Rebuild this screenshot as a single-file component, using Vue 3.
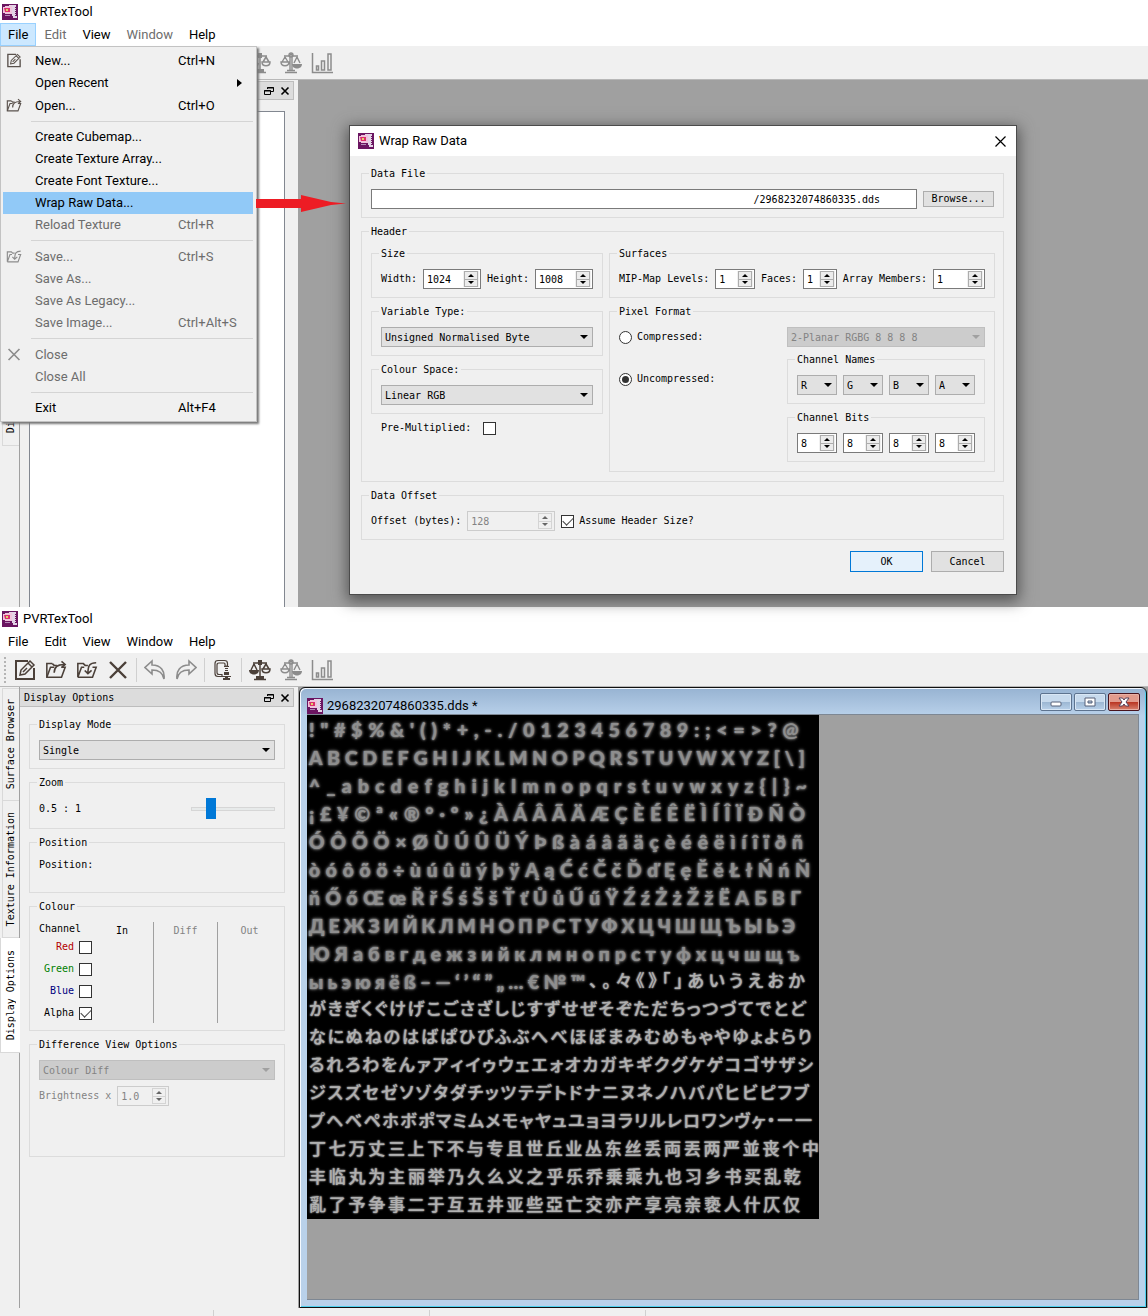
<script setup>
import { ref } from 'vue'

const menus = ['File', 'Edit', 'View', 'Window', 'Help']
const dimmed = ['Edit', 'Window']

const fileMenu = [
  { label: 'New...', key: 'Ctrl+N', icon: 'new' },
  { label: 'Open Recent', sub: true },
  { label: 'Open...', key: 'Ctrl+O', icon: 'open' },
  { sep: true },
  { label: 'Create Cubemap...' },
  { label: 'Create Texture Array...' },
  { label: 'Create Font Texture...' },
  { label: 'Wrap Raw Data...', active: true },
  { label: 'Reload Texture', key: 'Ctrl+R', off: true },
  { sep: true },
  { label: 'Save...', key: 'Ctrl+S', icon: 'save', off: true },
  { label: 'Save As...', off: true },
  { label: 'Save As Legacy...', off: true },
  { label: 'Save Image...', key: 'Ctrl+Alt+S', off: true },
  { sep: true },
  { label: 'Close', icon: 'close', off: true },
  { label: 'Close All', off: true },
  { sep: true },
  { label: 'Exit', key: 'Alt+F4' },
]

const tools = [
  [
    { icon: 'new', name: 'New' },
    { icon: 'open', name: 'Open' },
    { icon: 'save', name: 'Save' },
    { icon: 'close', name: 'Close' },
  ],
  [
    { icon: 'undo', name: 'Undo', off: true },
    { icon: 'redo', name: 'Redo', off: true },
  ],
  [{ icon: 'compress', name: 'Compress' }],
  [
    { icon: 'scale-left', name: 'Compare left' },
    { icon: 'scale-right', name: 'Compare right', off: true },
    { icon: 'chart', name: 'Statistics', off: true },
  ],
]

const size = ref([
  { label: 'Width:', value: 1024, cls: 'w58' },
  { label: 'Height:', value: 1008, cls: 'w58' },
])
const surfaces = ref([
  { label: 'MIP-Map Levels:', value: 1, cls: 'w40' },
  { label: 'Faces:', value: 1, cls: 'w34' },
  { label: 'Array Members:', value: 1, cls: 'w52' },
])
const names = ['R', 'G', 'B', 'A']
const bits = ref([8, 8, 8, 8])
const channels = ref([
  { name: 'Red', on: false },
  { name: 'Green', on: false },
  { name: 'Blue', on: false },
  { name: 'Alpha', on: true },
])
const format = ref('uncompressed')
const zoom = ref(20)

// Glyph rows of the font texture; width is the packed extent of the row.
const glyphRows = [
  { text: '!"#$%&\'()*+,-./0123456789:;<=>?@', width: 490 },
  { text: 'ABCDEFGHIJKLMNOPQRSTUVWXYZ[\\]', width: 496 },
  { text: '^_abcdefghijklmnopqrstuvwxyz{|}~', width: 498 },
  { text: '¡£¥©ª«®°·º»¿ÀÁÂÃÄÆÇÈÉÊËÌÍÎÏÐÑÒ', width: 496 },
  { text: 'ÓÔÕÖ×ØÙÚÛÜÝÞßàáâãäçèéêëìíîïðñ', width: 494 },
  { text: 'òóôõö÷ùúûüýþÿĄąĆćČčĎďĘęĚěŁłŃńŇ', width: 501 },
  { text: 'ňŐőŒœŘřŚśŠšŤťŮůŰűŸŹźŻżŽžЁАБВГ', width: 492 },
  { text: 'ДЕЖЗИЙКЛМНОПРСТУФХЦЧШЩЪЫЬЭ', width: 486 },
  { text: 'ЮЯабвгдежзийклмнопрстуфхцчшщъ', width: 490 },
  { text: 'ыьэюяёß–—‘’“”„…€№™、。々《》「」あいうえおか', width: 496 },
  { text: 'がきぎくぐけげこごさざしじすずせぜそぞただちっつづてでとど', width: 497 },
  { text: 'なにぬねのはばぱひびふぶへべほぼまみむめもゃやゆょよらり', width: 503 },
  { text: 'るれろわをんァアィイゥウェエォオカガキギクグケゲコゴサザシ', width: 504 },
  { text: 'ジスズセゼソゾタダチッツテデトドナニヌネノハバパヒビピフブ', width: 500 },
  { text: 'プヘベペホボポマミムメモャヤュユョヨラリルレロワンヴヶ・ー一', width: 503 },
  { text: '丁七万丈三上下不与专且世丘业丛东丝丢両丟两严並丧个中', width: 510 },
  { text: '丰临丸为主丽举乃久么义之乎乐乔乗乘九也习乡书买乱乾', width: 492 },
  { text: '亂了予争事二于互五井亚些亞亡交亦产享亮亲亵人什仄仅', width: 491 },
]
const isCjk = (c) => c >= '\u3000'
</script>

<template>
  <main class="page">
    <svg class="defs" aria-hidden="true">
      <symbol id="icon-app" viewBox="0 0 16 16">
        <rect width="16" height="16" fill="#6b1561" />
        <path d="M7 1h7v2h-1v1h1v1h-1v1h1v1h-1v1h1v1h-1v1h1v1h-1v1h2v2h-4v-2h-1V3H7z" fill="#e3d3e6" />
        <path d="M1 3h2V2h7v8H3v-1H1z" fill="#f0c3dc" />
        <path d="M2 4h6v4H3z" fill="#dc2f6c" />
        <path d="M4 5h2v2H4z" fill="#d9d86a" />
        <path d="M3 11h5v1H3z" fill="#b58bb8" />
      </symbol>
      <symbol id="icon-new" viewBox="0 0 22 22">
        <g fill="none" stroke="currentColor">
          <path d="M14 2H2v18h18V9" stroke-width="2" />
          <path d="M6 16l1-5 9-9 4 4-9 9zM14 4l4 4M9 13l4-4" stroke-width="1.500" />
        </g>
      </symbol>
      <symbol id="icon-open" viewBox="0 0 24 22">
        <g fill="none" stroke="currentColor" stroke-width="1.700">
          <path d="M8 4H2v15h16l4-11h-4" />
          <path d="M2 19l4-11h4M10 14c0-6 3-9 11-9M18 1.500l4 3.500-4 3.500" />
          <path d="M8 4l2 2h3" />
        </g>
      </symbol>
      <symbol id="icon-save" viewBox="0 0 24 22">
        <g fill="none" stroke="currentColor" stroke-width="1.700">
          <path d="M9 8H6L2 19V4h6l2 2h3M2 19h16l4-11h-4" />
          <path d="M22 3c-7 0-9 3-9 12M9.500 11.500L13 15l4-3.500" />
        </g>
      </symbol>
      <symbol id="icon-close" viewBox="0 0 22 22">
        <path d="M3 3l16 16M19 3L3 19" fill="none" stroke="currentColor" stroke-width="2.400" />
      </symbol>
      <symbol id="icon-undo" viewBox="0 0 22 22">
        <path d="M8 2L1 8.500 8 15v-4c7 0 11 3 12 9 1-8-3-14-12-14z" fill="none" stroke="currentColor" stroke-width="1.600" />
      </symbol>
      <symbol id="icon-redo" viewBox="0 0 22 22">
        <path d="M14 2l7 6.500L14 15v-4c-7 0-11 3-12 9C1 12 5 6 14 6z" fill="none" stroke="currentColor" stroke-width="1.600" />
      </symbol>
      <symbol id="icon-compress" viewBox="0 0 22 22">
        <path d="M15.500 7V4.500q0-3-3-3H6q-3 0-3 3v10q0 3 3 3h4v-2H7q-2 0-2-2V6q0-2 2-2h5q1 0 1 1v2z" fill="#f0f0f0" stroke="currentColor" stroke-width="1.200" />
        <path d="M12 7h5v1h-5zM13 9h3v1h-3zM13 11h3v1h-3zM12 13h5v3h-5zM10 17h9v1h-9zM13 18h3v1h2v2h-7v-2h2z" fill="currentColor" />
      </symbol>
      <symbol id="icon-scale-left" viewBox="0 0 22 22">
        <g fill="none" stroke="currentColor" stroke-width="1.500">
          <path d="M4 4h5l2-2 2 2h5M11 2v16M5 20.500h12M7 18.500h8M5 5l-3 6M5 5l3 6M17 5l-3 5M17 5l3 5M13 10h8c0 5-8 5-8 0z" />
        </g>
        <path d="M0 11h10c0 6-10 6-10 0zM9 1h4v5H9zM7 17h8v4H7z" fill="currentColor" />
      </symbol>
      <symbol id="icon-scale-right" viewBox="0 0 22 22">
        <g fill="none" stroke="currentColor" stroke-width="1.400">
          <path d="M4 4h5l2-2 2 2h5M10 3v15M12 3v15M5 20.500h12M7 18.500h8M5 5l-3 5M5 5l3 5M17 5l-3 6M17 5l3 6M1 10h8c0 5-8 5-8 0z" />
          <circle cx="11" cy="3" r="2" />
        </g>
        <path d="M12 12h10c0 6-10 6-10 0z" fill="currentColor" />
      </symbol>
      <symbol id="icon-chart" viewBox="0 0 22 22">
        <path d="M1.500 1v19.500H22M5.500 18v-4h2v4zM10.500 18V9h3v9zM17 18V2h3v16z" fill="none" stroke="currentColor" stroke-width="1.500" />
      </symbol>
    </svg>

    <section v-for="win in [1, 2]" :key="win" class="window">
      <header class="caption ui"><svg class="i16"><use href="#icon-app" /></svg>PVRTexTool</header>
      <nav class="menubar">
        <button
          v-for="m in menus"
          :key="m"
          class="menu ui"
          :class="{ open: win === 1 && m === 'File', dim: win === 1 && dimmed.includes(m) }"
        >{{ m }}</button>
      </nav>
      <div class="toolbar">
        <span class="grip"></span>
        <div v-for="(group, g) in tools" :key="g" class="toolgroup">
          <button
            v-for="t in group"
            :key="t.icon"
            class="tool"
            :class="{ off: t.off || win === 1 }"
            :aria-label="t.name"
          ><svg><use :href="'#icon-' + t.icon" /></svg></button>
        </div>
      </div>

      <div class="work" :class="{ first: win === 1 }">
        <nav class="tabs">
          <button class="tab t1"><span>Surface Browser</span></button>
          <button class="tab t2"><span>Texture Information</span></button>
          <button class="tab t3" :class="{ current: win === 2 }"><span>Display Options</span></button>
        </nav>
        <aside class="dock">
          <div class="docktitle">
            <span>{{ win === 2 ? 'Display Options' : '' }}</span>
            <button aria-label="Float">
              <svg viewBox="0 0 10 10"><path d="M3.500 3V1.500h6v4H7M3 2h7M.500 4.500h6v4h-6zM0 5h7" fill="none" stroke="#000" /></svg>
            </button>
            <button aria-label="Close panel">
              <svg viewBox="0 0 10 10"><path d="M1.500 1.500l7 7M8.500 1.500l-7 7" fill="none" stroke="#000" stroke-width="1.600" /></svg>
            </button>
          </div>
          <div v-if="win === 1" class="blank"></div>
          <div v-else class="options">
            <fieldset>
              <legend>Display Mode</legend>
              <span class="combo"><select aria-label="Display mode"><option>Single</option></select></span>
            </fieldset>
            <fieldset class="zoom">
              <legend>Zoom</legend>
              <label for="zoom">0.5 : 1</label>
              <input id="zoom" v-model="zoom" type="range" min="0" max="100" />
            </fieldset>
            <fieldset class="position">
              <legend>Position</legend>
              <span>Position:</span>
            </fieldset>
            <fieldset class="colour">
              <legend>Colour</legend>
              <div class="channels">
                <span class="head">Channel</span>
                <label v-for="c in channels" :key="c.name" :class="c.name.toLowerCase()">
                  {{ c.name }}<input v-model="c.on" type="checkbox" />
                </label>
              </div>
              <span class="col">In</span>
              <span class="col ruled">Diff</span>
              <span class="col ruled">Out</span>
            </fieldset>
            <fieldset class="diff">
              <legend>Difference View Options</legend>
              <span class="combo disabled"><select disabled aria-label="Difference mode"><option>Colour Diff</option></select></span>
              <div class="line">
                <label for="bright">Brightness x</label>
                <span class="spin w52 disabled">
                  <input id="bright" type="text" value="1.0" disabled />
                  <span class="arrows"><i></i><i></i></span>
                </span>
              </div>
            </fieldset>
          </div>
        </aside>

        <div class="mdi">
          <article v-if="win === 2" class="child">
            <header class="childbar ui">
              <svg class="i16"><use href="#icon-app" /></svg>
              <span>2968232074860335.dds *</span>
              <button aria-label="Minimise"><svg viewBox="0 0 30 16"><rect x="10" y="8" width="10" height="4" rx="1" fill="#fff" stroke="#566079" /></svg></button>
              <button aria-label="Maximise"><svg viewBox="0 0 30 16"><path d="M10 4h10v8H10zM13 7v2h4V7z" fill="#fff" fill-rule="evenodd" stroke="#566079" /></svg></button>
              <button class="shut" aria-label="Close"><svg viewBox="0 0 30 16"><path d="M10 4h3.500L15 6l1.500-2H20l-3 4 3 4h-3.500L15 10l-1.500 2H10l3-4z" fill="#fff" stroke="#56405a" /></svg></button>
            </header>
            <div class="canvas">
              <div class="atlas">
                <div v-for="(row, r) in glyphRows" :key="r" class="glyphs" :style="{ width: row.width + 'px' }">
                  <span v-for="(c, i) in [...row.text]" :key="i" :class="{ cjk: isCjk(c) }">{{ c }}</span>
                </div>
              </div>
            </div>
          </article>
        </div>
      </div>

      <template v-if="win === 1">
        <div class="popup ui" role="menu">
          <template v-for="(m, i) in fileMenu" :key="i">
            <hr v-if="m.sep" />
            <button v-else class="item" :class="{ active: m.active, off: m.off, tall: m.icon }" role="menuitem">
              <svg v-if="m.icon" class="glyph"><use :href="'#icon-' + m.icon" /></svg>
              <span class="name">{{ m.label }}</span>
              <span class="key">{{ m.key }}</span>
              <svg v-if="m.sub" class="sub" viewBox="0 0 5 8"><path d="M0 0l5 4-5 4z" /></svg>
            </button>
          </template>
        </div>
        <svg class="pointer" viewBox="0 0 90 18"><path d="M0 4h45V0l30 7 15 1.500-15 1.500-30 7v-4H0z" fill="#ed1c24" /></svg>

        <form class="dialog" @submit.prevent>
          <header class="ui">
            <svg class="i16"><use href="#icon-app" /></svg><span>Wrap Raw Data</span>
            <button type="button" aria-label="Close dialog"><svg viewBox="0 0 11 11"><path d="M.500.500l10 10M10.500.500l-10 10" stroke="#000" stroke-width="1.200" /></svg></button>
          </header>
          <div class="content">
            <fieldset class="line file">
              <legend>Data File</legend>
              <input type="text" aria-label="Data file" value="/2968232074860335.dds" />
              <button type="button" class="push small">Browse...</button>
            </fieldset>

            <fieldset class="header">
              <legend>Header</legend>
              <div class="pair">
                <fieldset class="left line spread">
                  <legend>Size</legend>
                  <template v-for="s in size" :key="s.label">
                    <label :for="s.label">{{ s.label }}</label>
                    <span class="spin" :class="s.cls">
                      <input :id="s.label" v-model="s.value" type="number" />
                      <span class="arrows"><i></i><i></i></span>
                    </span>
                  </template>
                </fieldset>
                <fieldset class="right line spread">
                  <legend>Surfaces</legend>
                  <template v-for="s in surfaces" :key="s.label">
                    <label :for="s.label">{{ s.label }}</label>
                    <span class="spin" :class="s.cls">
                      <input :id="s.label" v-model="s.value" type="number" />
                      <span class="arrows"><i></i><i></i></span>
                    </span>
                  </template>
                </fieldset>
              </div>
              <div class="pair">
                <div class="left stack">
                  <fieldset>
                    <legend>Variable Type:</legend>
                    <span class="combo"><select aria-label="Variable type"><option>Unsigned Normalised Byte</option></select></span>
                  </fieldset>
                  <fieldset>
                    <legend>Colour Space:</legend>
                    <span class="combo"><select aria-label="Colour space"><option>Linear RGB</option></select></span>
                  </fieldset>
                  <label class="premult">Pre-Multiplied:<input type="checkbox" /></label>
                </div>
                <fieldset class="right pixel">
                  <legend>Pixel Format</legend>
                  <div class="radios">
                    <label><input v-model="format" type="radio" value="compressed" />Compressed:</label>
                    <label><input v-model="format" type="radio" value="uncompressed" />Uncompressed:</label>
                  </div>
                  <div class="formats">
                    <span class="combo disabled"><select disabled aria-label="Compressed format"><option>2-Planar RGBG 8 8 8 8</option></select></span>
                    <div class="stack">
                      <fieldset class="line">
                        <legend>Channel Names</legend>
                        <span v-for="n in names" :key="n" class="combo w40"><select :aria-label="'Channel ' + n"><option>{{ n }}</option></select></span>
                      </fieldset>
                      <fieldset class="line">
                        <legend>Channel Bits</legend>
                        <span v-for="(b, i) in bits" :key="i" class="spin w40">
                          <input v-model="bits[i]" type="number" :aria-label="'Bits for ' + names[i]" />
                          <span class="arrows"><i></i><i></i></span>
                        </span>
                      </fieldset>
                    </div>
                  </div>
                </fieldset>
              </div>
            </fieldset>

            <fieldset class="line">
              <legend>Data Offset</legend>
              <label for="offset">Offset (bytes):</label>
              <span class="spin w88 disabled">
                <input id="offset" type="number" value="128" disabled />
                <span class="arrows"><i></i><i></i></span>
              </span>
              <label class="assume"><input type="checkbox" checked />Assume Header Size?</label>
            </fieldset>
            <div class="actions">
              <button class="push primary">OK</button>
              <button type="button" class="push">Cancel</button>
            </div>
          </div>
        </form>
      </template>
      <footer v-else class="status"><span></span><span></span><span></span><span></span></footer>
    </section>
  </main>
</template>

<style>
body { margin: 0; background: #fff; }
</style>

<style scoped>
* { box-sizing: border-box; }
.page {
  font: 10px/12px "DejaVu Sans Mono", "Liberation Mono", monospace;
  color: #000;
}
.defs { position: absolute; width: 0; height: 0; }
button, input, select { font: inherit; color: inherit; margin: 0; padding: 0; border-radius: 0; }
button { border: 0; background: none; }
svg { display: block; }
.ui { font: 13px/16px Roboto, "Noto Sans", sans-serif; }
.i16 { width: 16px; height: 16px; flex: none; }

.window { position: relative; background: #f0f0f0; }
.caption {
  display: flex; align-items: center; gap: 5px;
  height: 23px; padding-left: 2px; background: #fff;
}
.menubar { display: flex; height: 24px; background: #fff; border-bottom: 1px solid #f0f0f0; }
.menu { height: 23px; padding: 0 7px; border: 1px solid transparent; }
.menu.open { background: #cce8ff; border-color: #99d1ff; }
.menu.dim { color: #6d6d6d; }

.toolbar { display: flex; align-items: center; height: 33px; border-bottom: 1px solid #b8b8b8; padding-left: 4px; }
.grip { width: 2px; height: 26px; border-left: 2px dotted #b4b4b4; margin-right: 3px; }
.toolgroup { display: flex; align-items: center; }
.toolgroup + .toolgroup { border-left: 1px solid #d0d0d0; margin-left: 3px; padding-left: 2px; }
.tool { width: 31px; height: 24px; display: grid; place-items: center; color: #4b4039; }
.tool svg { width: 22px; height: 22px; }
.tool.off { color: #8c8c8c; }

.work { display: flex; min-height: 621px; }
.work.first { min-height: 527px; }
.tabs { display: flex; flex-direction: column; width: 20px; flex: none; border-right: 1px solid #a0a0a0; padding-top: 1px; }
.tab {
  margin: 0 0 0 2px; width: 17px; border: 1px solid #d9d9d9; border-right: 0;
  display: flex; align-items: center; justify-content: center;
}
.tab span { writing-mode: vertical-rl; transform: rotate(180deg); line-height: 14px; }
.t1 { height: 113px; }
.t2 { height: 137px; border-top: 0; }
.t3 { height: 115px; border-top: 0; }
.tab.current { margin: 0; width: 20px; background: #fff; }

.dock { width: 274px; flex: none; display: flex; flex-direction: column; padding-top: 1px; }
.docktitle {
  display: flex; align-items: center; gap: 6px; height: 19px; padding: 0 3px 0 4px;
  background: #dcdcdc; border: 1px solid #bdbdbd; border-left: 0;
}
.docktitle span { flex: 1; line-height: 14px; padding-top: 1px; }
.docktitle svg { width: 10px; height: 10px; }
.blank { flex: 1; margin: 11px 9px 0 9px; background: #fff; border: 1px solid #828790; border-bottom: 0; }
.options { display: flex; flex-direction: column; gap: 7px; padding: 11px 9px 0 9px; }

fieldset { min-width: 0; margin: 0; border: 1px solid #dcdcdc; padding: 10px 9px 8px; }
legend { height: 12px; line-height: 14px; padding: 0 2px; margin-left: -2px; }
.line { display: flex; align-items: center; gap: 6px; }
.spread { justify-content: space-between; gap: 0; }
label { white-space: nowrap; line-height: 14px; }

.combo { position: relative; display: block; height: 20px; }
.combo select {
  appearance: none; display: block; width: 100%; height: 20px; padding: 1px 16px 0 3px;
  background: #e1e1e1; border: 1px solid #adadad; border-radius: 0; opacity: 1;
}
.combo::after {
  content: ""; position: absolute; right: 5px; top: 8px; pointer-events: none;
  border: 4px solid transparent; border-top-color: #000; border-bottom: 0;
}
.combo.disabled select { background: #ccc; border-color: #bfbfbf; color: #838383; }
.combo.disabled::after { border-top-color: #a0a0a0; }

.spin { display: flex; height: 20px; background: #fff; border: 1px solid #7a7a7a; padding: 1px; }
.spin input { flex: 1; width: 0; border: 0; background: none; padding: 1px 0 0 2px; outline: 0; appearance: textfield; }
.spin input::-webkit-inner-spin-button { appearance: none; }
.arrows { width: 16px; background: #f0f0f0; padding: 0 1px; display: flex; flex-direction: column; }
.arrows i { flex: 1; border: 1px solid #adadad; display: grid; place-items: center; background: #ececec; }
.arrows i + i { border-top: 0; }
.arrows i::before { content: ""; border: 3px solid transparent; border-bottom-color: #000; border-top: 0; }
.arrows i + i::before { border: 3px solid transparent; border-top-color: #000; border-bottom: 0; }
.spin.disabled { background: #f0f0f0; border-color: #ccc; color: #838383; }
.spin.disabled i { border-color: #d4d4d4; background: #f0f0f0; }
.spin.disabled i:first-child::before { border-bottom-color: #666; }
.spin.disabled i:last-child::before { border-top-color: #666; }
.w34 { width: 34px; } .w40 { width: 40px; } .w52 { width: 52px; } .w58 { width: 58px; } .w88 { width: 88px; }

input[type="checkbox"] {
  appearance: none; width: 13px; height: 13px; flex: none; background: #fff; border: 1px solid #333;
  display: grid; place-items: center;
}
input[type="checkbox"]:checked::after {
  content: ""; width: 5px; height: 9px; margin-top: -3px;
  border: solid #444; border-width: 0 1px 1px 0; transform: rotate(45deg);
}
input[type="radio"] {
  appearance: none; width: 13px; height: 13px; flex: none; background: #fff; border: 1px solid #333;
  border-radius: 50%; display: grid; place-items: center;
}
input[type="radio"]:checked::after { content: ""; width: 7px; height: 7px; border-radius: 50%; background: #333; }

.zoom { display: flex; align-items: center; justify-content: space-between; height: 53px; }
.zoom input { appearance: none; width: 84px; height: 21px; background: none; }
.zoom input::-webkit-slider-runnable-track { height: 4px; background: #e7eaea; border: 1px solid #d6d6d6; }
.zoom input::-webkit-slider-thumb { appearance: none; width: 10px; height: 21px; margin-top: -10px; background: #0078d7; }
.position { height: 57px; line-height: 14px; }
.colour { display: flex; height: 131px; }
.channels { width: 56px; flex: none; line-height: 14px; }
.channels .head { display: block; }
.channels label { display: flex; align-items: center; justify-content: flex-end; gap: 5px; height: 22px; padding-right: 3px; }
.red { color: #b40000; }
.green { color: #008000; }
.blue { color: #000080; }
.col { width: 64px; flex: none; text-align: center; padding-top: 3px; height: 101px; }
.col:not(.ruled) { width: 58px; padding-right: 4px; }
.ruled { border-left: 1px solid #a0a0a0; color: #838383; }
.diff { height: 119px; color: #838383; }
.diff legend { color: #000; }
.diff .line { margin-top: 6px; }

.mdi { flex: 1; min-width: 0; margin-left: 4px; background: #a0a0a0; display: flex; }
.child {
  flex: 1; min-width: 0; display: flex; flex-direction: column; margin: 0 1px;
  border: 1px solid #111; border-radius: 6px 6px 0 0; padding: 0 7px 7px;
  background: linear-gradient(#97b3d2, #b9d1ea 28px); box-shadow: inset 1px 1px #f4f9ff, inset -1px -1px #4dd0ee;
}
.childbar { display: flex; align-items: center; height: 26px; gap: 2px; margin-right: -1px; }
.childbar span { flex: 1; padding: 9px 0 0 2px; }
.childbar .i16 { margin-top: 9px; }
.childbar button {
  width: 32px; height: 18px; margin-top: 2px; border: 1px solid #5d738f; border-radius: 2px;
  background: linear-gradient(#c7daed 50%, #9bb6d2 50%, #b9d1ea); box-shadow: inset 0 0 0 1px #d9e7f5;
}
.childbar .shut { border-color: #47121c; background: linear-gradient(#e29b8d 50%, #b93320 50%, #d98370); box-shadow: inset 0 0 0 1px #e9b0a5; }
.canvas { flex: 1; background: #a0a0a0; border: solid #7d8793; border-width: 1px 1px 1px 0; }
.atlas { width: 512px; background: #000; padding: 0 0 0 2px; overflow: hidden; }
.glyphs { display: flex; justify-content: space-between; height: 28px; }
.glyphs span {
  font: 900 19px/30px Lato, "Open Sans", sans-serif; color: #8e8e8e;
  text-shadow: 0 0 1px #777, 0 0 2px #777, 0 0 3px #777, 0 0 4px #555;
}
.glyphs .cjk {
  font: 500 17px/26px "Noto Sans CJK SC", sans-serif; color: #b0b0b0;
  font-feature-settings: "palt"; text-shadow: 0 0 1px #888, 0 0 2px #888, 0 0 2px #777;
}
.status { display: flex; height: 8px; }
.status span { width: 216px; border-right: 1px solid #d0d0d0; margin-top: 2px; }
.status span:first-child { width: 214px; }
.status span:last-child { border: 0; }

.popup {
  position: absolute; left: 0; top: 46px; width: 257px; padding: 2px 3px 2px 2px; z-index: 1;
  background: #f0f0f0; border: 1px solid #c3c3c3; box-shadow: 2px 2px 2px #777;
}
.popup hr { height: 1px; margin: 4px 0 4px 28px; border: 0; background: #d4d4d4; }
.item { display: flex; align-items: center; width: 100%; height: 22px; padding-left: 32px; text-align: left; position: relative; }
.item.tall { height: 23px; }
.item .glyph { position: absolute; left: 3px; width: 16px; height: 15px; color: #5a524d; }
.item .name { width: 143px; }
.item.active { background: #91c9f7; }
.item.off { color: #6d6d6d; }
.item.off .glyph { color: #8c8c8c; }
.sub { width: 5px; height: 8px; margin-left: 59px; }
.key { white-space: nowrap; }
.pointer { position: absolute; left: 256px; top: 195px; width: 90px; height: 18px; z-index: 2; }

.dialog {
  position: absolute; left: 349px; top: 125px; width: 668px; z-index: 1;
  background: #f0f0f0; border: 1px solid #4b4b4b; box-shadow: 0 4px 14px 2px #555;
}
.dialog > header { display: flex; align-items: center; gap: 5px; height: 30px; padding: 0 10px 0 8px; background: #fff; }
.dialog > header span { flex: 1; }
.dialog > header svg { overflow: visible; }
.dialog > header button svg { width: 11px; height: 11px; }
.content { padding: 11px 12px 22px 11px; display: flex; flex-direction: column; gap: 7px; }
.file input { flex: 1; height: 20px; border: 1px solid #7a7a7a; background: #fff; text-align: right; padding: 1px 36px 0 0; }
.push { width: 73px; height: 21px; background: #e1e1e1; border: 1px solid #adadad; }
.push.small { width: 71px; height: 16px; line-height: 14px; }
.push.primary { background: #e5f1fb; border-color: #0078d7; }
.header { padding: 10px 8px 9px 9px; }
.pair { display: flex; gap: 6px; }
.pair + .pair { margin-top: 7px; }
.left { width: 232px; flex: none; }
.right { flex: 1; }
.stack { display: flex; flex-direction: column; gap: 7px; }
.premult { display: flex; align-items: center; gap: 12px; padding-left: 10px; }
.pixel { display: flex; padding-bottom: 9px; }
.radios { flex: 1; display: flex; flex-direction: column; gap: 22px; }
.radios label, .assume { display: flex; align-items: center; gap: 5px; height: 20px; }
.formats { width: 198px; display: flex; flex-direction: column; gap: 6px; }
.actions { display: flex; justify-content: flex-end; gap: 8px; padding-top: 4px; }
</style>
